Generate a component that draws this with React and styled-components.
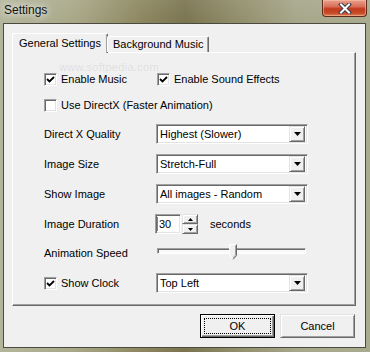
import React from "react";
import styled, { createGlobalStyle } from "styled-components";

const GlobalStyle = createGlobalStyle`
  html, body {
    margin: 0;
    padding: 0;
  }
  body {
    font-family: "Liberation Sans", "DejaVu Sans", sans-serif;
    font-size: 11px;
    color: #000;
  }
`;

export default function App() {
  return (
    <>
      <GlobalStyle />
      <Window>
        <TitleBar>
          <Title>Settings</Title>
          <CloseButton>
            <svg width="14" height="11" viewBox="0 0 14 11">
              <path d="M3 1.5 L11 9.5 M11 1.5 L3 9.5" stroke="#3a3a4a" strokeWidth="4" strokeLinecap="square" />
              <path d="M3 1.5 L11 9.5 M11 1.5 L3 9.5" stroke="#fff" strokeWidth="2" strokeLinecap="square" />
            </svg>
          </CloseButton>
        </TitleBar>

        <Client>
          <TabStrip>
            <Tab $active>General Settings</Tab>
            <Tab>Background Music</Tab>
          </TabStrip>

          <Panel>
            <Watermark>www.softpedia.com</Watermark>

            <Row $mt={0}>
              <CheckItem $width={113}>
                <CheckBox checked />
                Enable Music
              </CheckItem>
              <CheckItem>
                <CheckBox checked />
                Enable Sound Effects
              </CheckItem>
            </Row>

            <Row $mt={6}>
              <CheckItem>
                <CheckBox />
                Use DirectX (Faster Animation)
              </CheckItem>
            </Row>

            <Row $mt={9}>
              <Label>Direct X Quality</Label>
              <Select value="Highest (Slower)" />
            </Row>

            <Row>
              <Label>Image Size</Label>
              <Select value="Stretch-Full" />
            </Row>

            <Row>
              <Label>Show Image</Label>
              <Select value="All images - Random" />
            </Row>

            <Row>
              <Label>Image Duration</Label>
              <SpinInput>30</SpinInput>
              <Spinner>
                <SpinButton>
                  <svg width="5" height="3" viewBox="0 0 5 3"><path d="M2.5 0 L5 3 L0 3 Z" fill="#000" /></svg>
                </SpinButton>
                <SpinButton>
                  <svg width="5" height="3" viewBox="0 0 5 3"><path d="M0 0 L5 0 L2.5 3 Z" fill="#000" /></svg>
                </SpinButton>
              </Spinner>
              <Units>seconds</Units>
            </Row>

            <Row $mt={9}>
              <Label>Animation Speed</Label>
              <Slider>
                <Track />
                <Thumb $pos={0.48}>
                  <svg width="8" height="16" viewBox="0 0 8 16">
                    <path d="M0.5 0.5 H7.5 V11.5 L4 15.5 L0.5 11.5 Z" fill="#f0f0f0" stroke="#fff" />
                    <path d="M7.5 0.5 V11.5 L4 15.5" fill="none" stroke="#696969" />
                    <path d="M6.5 1.5 V11 L4 14" fill="none" stroke="#a0a0a0" />
                  </svg>
                </Thumb>
              </Slider>
            </Row>

            <Row>
              <CheckItem $width={112}>
                <CheckBox checked />
                Show Clock
              </CheckItem>
              <Select value="Top Left" />
            </Row>
          </Panel>

          <ButtonRow>
            <Button $default>
              <FocusRect>OK</FocusRect>
            </Button>
            <Button>Cancel</Button>
          </ButtonRow>
        </Client>
      </Window>
    </>
  );
}

function CheckBox({ checked }) {
  return (
    <Box>
      {checked && (
        <svg width="9" height="9" viewBox="0 0 9 9">
          <path d="M1 4 L3.5 6.5 L8 2" fill="none" stroke="#000" strokeWidth="1.8" />
        </svg>
      )}
    </Box>
  );
}

function Select({ value }) {
  return (
    <Combo>
      <ComboText>{value}</ComboText>
      <DropButton>
        <svg width="7" height="4" viewBox="0 0 7 4"><path d="M0 0 H7 L3.5 4 Z" fill="#000" /></svg>
      </DropButton>
    </Combo>
  );
}

const Window = styled.div`
  width: 370px;
  height: 352px;
  display: flex;
  flex-direction: column;
  box-sizing: border-box;
  background:
    linear-gradient(180deg, rgba(255, 255, 255, 0.08) 0px, rgba(0, 0, 0, 0) 23px),
    linear-gradient(90deg, #b4b69c 0%, #a8a888 20%, #8d8760 38%, #7a7450 50%, #8e8a66 62%, #a6a68a 80%, #a9ab8f 100%);
`;

const TitleBar = styled.div`
  height: 23px;
  display: flex;
  justify-content: space-between;
  align-items: flex-start;
  padding-left: 4px;
  flex-shrink: 0;
`;

const Title = styled.div`
  font-size: 12px;
  line-height: 21px;
  color: #111;
  text-shadow: 0 0 6px rgba(255, 255, 255, 0.9), 0 0 10px rgba(255, 255, 255, 0.7);
`;

const CloseButton = styled.div`
  width: 45px;
  height: 17px;
  margin-right: 3px;
  box-sizing: border-box;
  border: 1px solid #5e2a1c;
  border-top: none;
  border-radius: 0 0 4px 4px;
  background: linear-gradient(180deg, #e7a08c 0%, #d9705a 40%, #c2391c 55%, #c64a26 80%, #dc7c52 100%);
  box-shadow: inset 0 0 0 1px rgba(255, 200, 180, 0.5);
  display: flex;
  align-items: center;
  justify-content: center;
`;

const Client = styled.div`
  flex: 1;
  margin: 0 4px 4px 3px;
  background: #f0f0f0;
  border: 1px solid #4a4a40;
  padding: 9px 9px 0 8px;
  display: flex;
  flex-direction: column;
`;

const TabStrip = styled.div`
  display: flex;
  align-items: flex-end;
  height: 19px;
  position: relative;
  z-index: 1;
`;

const Tab = styled.div`
  box-sizing: border-box;
  height: ${(p) => (p.$active ? "20px" : "16px")};
  margin-bottom: ${(p) => (p.$active ? "-1px" : "0")};
  padding: ${(p) => (p.$active ? "3px 6px 0 6px" : "1px 5px 0 5px")};
  background: #f0f0f0;
  border-top: 1px solid #fff;
  border-left: 1px solid #fff;
  border-right: 1px solid #696969;
  box-shadow: inset -1px 0 0 #a0a0a0;
  border-radius: 2px 2px 0 0;
  white-space: nowrap;
  line-height: 13px;
  margin-left: ${(p) => (p.$active ? "0" : "-1px")};
`;

const Panel = styled.div`
  position: relative;
  height: 254px;
  box-sizing: border-box;
  border-top: 1px solid #fff;
  border-left: 1px solid #fff;
  border-right: 1px solid #696969;
  border-bottom: 1px solid #696969;
  box-shadow: inset -1px -1px 0 #a0a0a0;
  padding: 16px 0 0 31px;
  display: flex;
  flex-direction: column;
`;

const Watermark = styled.div`
  position: absolute;
  left: 46px;
  top: 8px;
  color: #dcdcdc;
  font-size: 11px;
  letter-spacing: 0.3px;
  text-shadow: 0 0 1px #fff;
`;

const Row = styled.div`
  display: flex;
  align-items: center;
  height: 20px;
  margin-top: ${(p) => (p.$mt !== undefined ? p.$mt : 10)}px;
`;

const CheckItem = styled.label`
  display: flex;
  align-items: center;
  gap: 4px;
  width: ${(p) => (p.$width ? `${p.$width}px` : "auto")};
  white-space: nowrap;
`;

const Box = styled.span`
  width: 13px;
  height: 13px;
  box-sizing: border-box;
  background: #fff;
  border-top: 1px solid #a0a0a0;
  border-left: 1px solid #a0a0a0;
  border-right: 1px solid #fff;
  border-bottom: 1px solid #fff;
  box-shadow: inset 1px 1px 0 #696969, inset -1px -1px 0 #e3e3e3;
  display: flex;
  align-items: center;
  justify-content: center;
  flex-shrink: 0;
`;

const Label = styled.span`
  width: 112px;
  flex-shrink: 0;
  white-space: nowrap;
`;

const Sunken = styled.div`
  box-sizing: border-box;
  background: #fff;
  border-top: 1px solid #a0a0a0;
  border-left: 1px solid #a0a0a0;
  border-right: 1px solid #fff;
  border-bottom: 1px solid #fff;
  box-shadow: inset 1px 1px 0 #696969, inset -1px -1px 0 #e3e3e3;
`;

const Combo = styled(Sunken)`
  width: 152px;
  height: 20px;
  display: flex;
  align-items: center;
  padding: 2px;
`;

const ComboText = styled.span`
  flex: 1;
  padding-left: 1px;
  white-space: nowrap;
  overflow: hidden;
`;

const Raised = styled.div`
  box-sizing: border-box;
  background: #f0f0f0;
  border-top: 1px solid #e3e3e3;
  border-left: 1px solid #e3e3e3;
  border-right: 1px solid #696969;
  border-bottom: 1px solid #696969;
  box-shadow: inset 1px 1px 0 #fff, inset -1px -1px 0 #a0a0a0;
`;

const DropButton = styled(Raised)`
  width: 16px;
  height: 16px;
  display: flex;
  align-items: center;
  justify-content: center;
`;

const SpinInput = styled(Sunken)`
  width: 26px;
  height: 20px;
  padding: 0 0 0 3px;
  line-height: 18px;
  position: relative;
  margin-left: -1px;
  &::before {
    content: "";
    position: absolute;
    left: 1px;
    top: 2px;
    bottom: 2px;
    width: 1px;
    background: #d86a2a;
  }
`;

const Spinner = styled.div`
  display: flex;
  flex-direction: column;
  width: 16px;
  height: 20px;
  margin-left: 1px;
`;

const SpinButton = styled(Raised)`
  flex: 1;
  display: flex;
  align-items: center;
  justify-content: center;
`;

const Units = styled.span`
  margin-left: 12px;
`;

const Slider = styled.div`
  position: relative;
  width: 149px;
  height: 20px;
  margin-left: 1px;
  display: flex;
  align-items: center;
`;

const Track = styled.div`
  width: 100%;
  height: 6px;
  box-sizing: border-box;
  background: #fafafa;
  border-top: 1px solid #a0a0a0;
  border-left: 1px solid #a0a0a0;
  border-right: 1px solid #fff;
  border-bottom: 1px solid #fff;
  box-shadow: inset 1px 1px 0 #696969;
  margin-top: -4px;
`;

const Thumb = styled.div`
  position: absolute;
  top: 1px;
  left: ${(p) => p.$pos * 100}%;
  width: 8px;
  height: 16px;
  line-height: 0;
`;

const ButtonRow = styled.div`
  display: flex;
  justify-content: flex-end;
  gap: 5px;
  margin-top: 8px;
  padding-right: 1px;
`;

const Button = styled(Raised)`
  width: 75px;
  height: 24px;
  display: flex;
  align-items: center;
  justify-content: center;
  ${(p) =>
    p.$default &&
    `
    border: 1px solid #000;
    box-shadow: inset 1px 1px 0 #fff, inset -1px -1px 0 #696969, inset -2px -2px 0 #a0a0a0;
    padding: 3px;
  `}
`;

const FocusRect = styled.div`
  flex: 1;
  align-self: stretch;
  display: flex;
  align-items: center;
  justify-content: center;
  border: 1px dotted #000;
`;
